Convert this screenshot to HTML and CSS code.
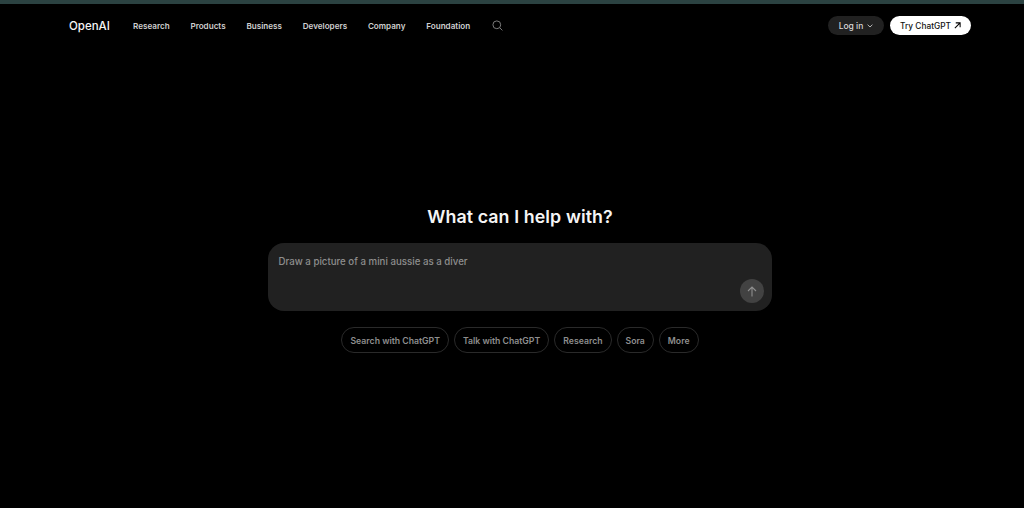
FILE: index.html
```html
<!DOCTYPE html>
<html lang="en">
<head>
    <meta charset="UTF-8">
    <meta name="viewport" content="width=device-width, initial-scale=1.0">
    <title>OpenAI</title>
    <link rel="stylesheet" href="styles.css">
</head>
<body>
    <div class="top-strip"></div>
    <header class="header">
        <nav class="nav">
            <a class="logo">OpenAI</a>
            <a class="nav-link">Research</a>
            <a class="nav-link">Products</a>
            <a class="nav-link">Business</a>
            <a class="nav-link">Developers</a>
            <a class="nav-link">Company</a>
            <a class="nav-link">Foundation</a>
            <svg class="search-icon" width="11" height="11" viewBox="0 0 11 11" fill="none" stroke="#7a7a7a" stroke-width="1">
                <circle cx="4.8" cy="4.8" r="3.9"/>
                <path d="M7.6 7.6L10.4 10.4"/>
            </svg>
        </nav>
        <div class="actions">
            <a class="login">Log in
                <svg width="6" height="4" viewBox="0 0 6 4" fill="none" stroke="#c8c8c8" stroke-width="0.9">
                    <path d="M0.6 0.7L3 3L5.4 0.7"/>
                </svg>
            </a>
            <a class="try">Try ChatGPT
                <svg width="7" height="7" viewBox="0 0 8 8" fill="none" stroke="#000" stroke-width="1.2">
                    <path d="M1 7L7 1M2 1H7V6"/>
                </svg>
            </a>
        </div>
    </header>
    <main class="main">
        <h1 class="heading">What can I help with?</h1>
        <div class="prompt">
            <div class="prompt-text">Draw a picture of a mini aussie as a diver</div>
            <div class="send">
                <svg width="10" height="11" viewBox="0 0 10 11" fill="none" stroke="#8f8f8f" stroke-width="1.1">
                    <path d="M5 10.5V1M1 5L5 1L9 5"/>
                </svg>
            </div>
        </div>
        <div class="chips">
            <a class="chip">Search with ChatGPT</a>
            <a class="chip">Talk with ChatGPT</a>
            <a class="chip">Research</a>
            <a class="chip">Sora</a>
            <a class="chip">More</a>
        </div>
    </main>
</body>
</html>
```
FILE: styles.css
```css
html, body {
    height: 100%;
}

body {
    margin: 0;
    background-color: #000;
    color: #fff;
    font-family: Inter, "Liberation Sans", sans-serif;
    overflow: hidden;
}

.top-strip {
    height: 4px;
    background-color: #2b4241;
}

.header {
    display: flex;
    align-items: center;
    justify-content: space-between;
    height: 19px;
    padding: 12px 53px 0 69px;
}

.nav {
    display: flex;
    align-items: center;
}

.logo {
    width: 64px;
    font-size: 11.5px;
    font-weight: 500;
    color: #f5f5f5;
}

.nav-link {
    margin-right: 20.8px;
    font-size: 8.1px;
    font-weight: 600;
    color: #d0d0d0;
}

.search-icon {
    margin-left: 1.5px;
}

.actions {
    display: flex;
    gap: 6px;
}

.login, .try {
    display: flex;
    align-items: center;
    justify-content: center;
    box-sizing: border-box;
    height: 19px;
    border-radius: 10px;
    font-weight: 500;
}

.login {
    gap: 4px;
    width: 56px;
    font-size: 8.5px;
    background-color: #212121;
    color: #d8d8d8;
}

.try {
    gap: 3px;
    width: 81px;
    font-size: 8.3px;
    background-color: #fff;
    color: #111;
}

.main {
    display: flex;
    flex-direction: column;
    align-items: center;
    padding: 171px 0 0 16px;
}

.heading {
    margin: 0 0 15px;
    font-size: 17.8px;
    line-height: 22px;
    font-weight: 600;
    letter-spacing: 0.1px;
    color: #f5f5f5;
}

.prompt {
    position: relative;
    box-sizing: border-box;
    width: 504px;
    height: 68px;
    padding: 12px 10.5px;
    background-color: #212121;
    border-radius: 16px;
}

.prompt-text {
    font-size: 9.7px;
    line-height: 12px;
    font-weight: 500;
    padding-top: 1px;
    color: #8e8e8e;
}

.send {
    position: absolute;
    right: 8px;
    bottom: 8px;
    display: flex;
    align-items: center;
    justify-content: center;
    width: 24px;
    height: 24px;
    border-radius: 50%;
    background-color: #424242;
}

.chips {
    display: flex;
    gap: 5px;
    margin-top: 16px;
}

.chip {
    display: flex;
    align-items: center;
    box-sizing: border-box;
    height: 26px;
    padding: 1px 8px 0;
    border: 1px solid #2a2a2a;
    border-radius: 13px;
    font-size: 8.7px;
    font-weight: 600;
    color: #8e8e8e;
}
```
